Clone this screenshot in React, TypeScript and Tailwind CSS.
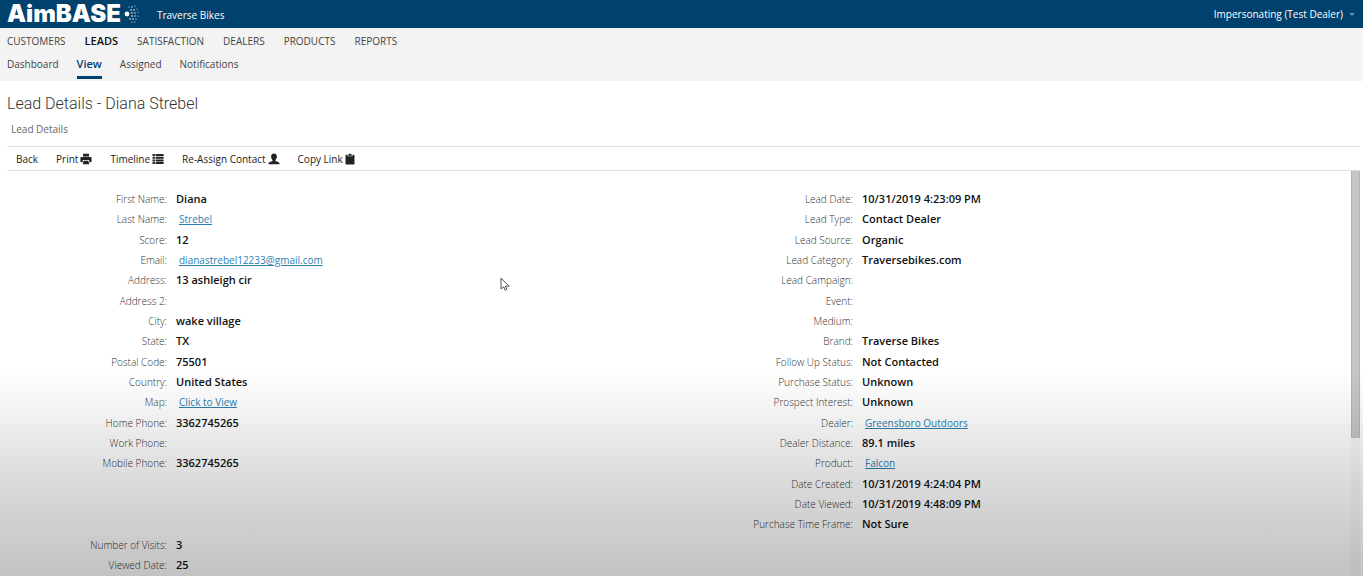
import type { ReactNode } from "react";

type Field = { label: string; value?: string; link?: boolean };

const sections = ["CUSTOMERS", "LEADS", "SATISFACTION", "DEALERS", "PRODUCTS", "REPORTS"];
const pages = ["Dashboard", "View", "Assigned", "Notifications"];

const contact: (Field | null)[] = [
  { label: "First Name", value: "Diana" },
  { label: "Last Name", value: "Strebel", link: true },
  { label: "Score", value: "12" },
  { label: "Email", value: "dianastrebel12233@gmail.com", link: true },
  { label: "Address", value: "13 ashleigh cir" },
  { label: "Address 2" },
  { label: "City", value: "wake village" },
  { label: "State", value: "TX" },
  { label: "Postal Code", value: "75501" },
  { label: "Country", value: "United States" },
  { label: "Map", value: "Click to View", link: true },
  { label: "Home Phone", value: "3362745265" },
  { label: "Work Phone" },
  { label: "Mobile Phone", value: "3362745265" },
  null,
  null,
  null,
  { label: "Number of Visits", value: "3" },
  { label: "Viewed Date", value: "25" },
];

const lead: (Field | null)[] = [
  { label: "Lead Date", value: "10/31/2019 4:23:09 PM" },
  { label: "Lead Type", value: "Contact Dealer" },
  { label: "Lead Source", value: "Organic" },
  { label: "Lead Category", value: "Traversebikes.com" },
  { label: "Lead Campaign" },
  { label: "Event" },
  { label: "Medium" },
  { label: "Brand", value: "Traverse Bikes" },
  { label: "Follow Up Status", value: "Not Contacted" },
  { label: "Purchase Status", value: "Unknown" },
  { label: "Prospect Interest", value: "Unknown" },
  { label: "Dealer", value: "Greensboro Outdoors", link: true },
  { label: "Dealer Distance", value: "89.1 miles" },
  { label: "Product", value: "Falcon", link: true },
  { label: "Date Created", value: "10/31/2019 4:24:04 PM" },
  { label: "Date Viewed", value: "10/31/2019 4:48:09 PM" },
  { label: "Purchase Time Frame", value: "Not Sure" },
];

const dots: [number, number, number][] = [
  [4, 10, 2.4],
  [8, 6, 0.8], [9, 9, 0.8], [9, 12, 0.8], [7, 15, 0.8],
  [9, 3, 0.7], [11, 6, 0.8], [12, 9, 0.7], [12, 12, 0.7], [10, 15, 0.8], [9, 18, 0.6],
  [6, 3, 0.5], [12, 2, 0.5], [14, 5, 0.5], [15, 8, 0.5], [15, 12, 0.5], [13, 15, 0.6], [12, 18, 0.5],
];

function LogoDots() {
  return (
    <svg viewBox="0 0 18 20" className="h-5 w-[18px] fill-white" aria-hidden="true">
      {dots.map(([x, y, r]) => (
        <circle key={`${x}-${y}`} cx={x} cy={y} r={r} />
      ))}
    </svg>
  );
}

function PrintIcon() {
  return (
    <svg viewBox="0 0 12 12" className="h-3 w-3 fill-current" aria-hidden="true">
      <path d="M3 .8h6v2.7H3zM1.4 4h9.2q1 0 1 1v3.3q0 .9-.9.9H9.6L9 7H3l-.6 2.2H1.3q-.9 0-.9-.9V5q0-1 1-1z" />
      <path d="M3.6 7.7h4.8l.9 3.6H2.7z" />
    </svg>
  );
}

function ListIcon() {
  return (
    <svg viewBox="0 0 12 12" className="h-3 w-3 fill-current" aria-hidden="true">
      <path d="M.5 1h2.4v2H.5zM3.6 1h8v2h-8zM.5 3.7h2.4v2H.5zM3.6 3.7h8v2h-8zM.5 6.4h2.4v2H.5zM3.6 6.4h8v2h-8zM.5 9.1h2.4v2H.5zM3.6 9.1h8v2h-8z" />
    </svg>
  );
}

function UserIcon() {
  return (
    <svg viewBox="0 0 12 12" className="h-3 w-3 fill-current" aria-hidden="true">
      <path d="M6 .4c1.8 0 2.9 1.3 2.9 3.1 0 1.2-.5 2.6-1.4 3.4v1l3.2 1.3c.6.3.8.7.8 1.2v.9H.5v-.9c0-.5.2-.9.8-1.2l3.2-1.3v-1C3.6 6.1 3.1 4.7 3.1 3.5 3.1 1.7 4.2.4 6 .4z" />
    </svg>
  );
}

function PasteIcon() {
  return (
    <svg viewBox="0 0 10 12" className="h-3 w-[10px] fill-current" aria-hidden="true">
      <path d="M1.2 1.7h1.3v1.6h5V1.7h1.3q.7 0 .7.7v8.4q0 .7-.7.7H1.200q-.7 0-.7-.7V2.4q0-.7.7-.7z" />
      <path d="M3.2 1.3h1Q4.300.4 5 .4t.8.9h1v1.4H3.2z" />
    </svg>
  );
}

function ToolButton({ children, icon }: { children: ReactNode; icon?: ReactNode }) {
  return (
    <button type="button" className="flex items-center gap-[2px]">
      {children}
      {icon}
    </button>
  );
}

function FieldList({ fields }: { fields: (Field | null)[] }) {
  return (
    <dl className="grid h-[386px] grid-rows-[repeat(19,1fr)]">
      {fields.map((f, i) =>
        f ? (
          <div key={f.label} className="flex min-h-0 items-center gap-[9px]">
            <dt className="w-40 text-right font-light text-[#333]">{f.label}:</dt>
            <dd>
              {f.link ? (
                <a href="#" className="ml-[3px] text-[#2b7fb0] underline">
                  {f.value}
                </a>
              ) : (
                <span className="text-[11px] font-semibold text-[#111]">{f.value}</span>
              )}
            </dd>
          </div>
        ) : (
          <div key={i} />
        ),
      )}
    </dl>
  );
}

export default function App() {
  return (
    <div className="relative flex h-screen flex-col overflow-hidden bg-white font-['Open_Sans','Noto_Sans',sans-serif] text-[10px] leading-4 text-[#444]">
      <header className="flex h-7 shrink-0 items-center bg-[#00426d] pr-2 pl-[7px] text-white">
        <a href="#" className="flex items-center gap-[2px]">
          <span className="font-[Inter,sans-serif] text-2xl leading-6 font-black">AimBASE</span>
          <LogoDots />
        </a>
        <span className="ml-4 pt-[2px]">Traverse Bikes</span>
        <button type="button" className="ml-auto flex items-center gap-[6px]">
          Impersonating (Test Dealer)
          <svg viewBox="0 0 6 3" className="h-[3px] w-[6px] fill-[#4f9bd0]" aria-hidden="true">
            <path d="M0 0h6L3 3z" />
          </svg>
        </button>
      </header>

      <div className="h-[53px] shrink-0 bg-[#f3f3f3] px-[7px] pt-[5px] text-[#444]">
        <nav aria-label="Sections" className="flex items-baseline gap-[19px]">
          {sections.map((s) => (
            <a key={s} href="#" className={s === "LEADS" ? "text-[11px] font-semibold text-[#111]" : ""}>
              {s}
            </a>
          ))}
        </nav>
        <nav aria-label="Pages" className="mt-[7px] flex items-baseline gap-[18px]">
          {pages.map((p) => (
            <a
              key={p}
              href="#"
              className={
                p === "View" ? "border-b-3 border-[#00426d] pb-1 text-[11px] font-semibold text-[#00426d]" : ""
              }
            >
              {p}
            </a>
          ))}
        </nav>
      </div>

      <main className="flex min-h-0 flex-1 flex-col pr-[3px] pl-[7px]">
        <h1 className="mt-3 font-[Roboto,sans-serif] text-base leading-[22px] font-light text-[#333]">
          Lead Details - Diana Strebel
        </h1>
        <h2 className="mt-[6px] ml-1 text-[#666]">Lead Details</h2>
        <div className="mt-[9px] flex h-[25px] shrink-0 items-center gap-[18px] border-y border-[#e0e0e0] pl-[9px] text-[#222]">
          <ToolButton>Back</ToolButton>
          <ToolButton icon={<PrintIcon />}>Print</ToolButton>
          <ToolButton icon={<ListIcon />}>Timeline</ToolButton>
          <ToolButton icon={<UserIcon />}>Re-Assign Contact</ToolButton>
          <ToolButton icon={<PasteIcon />}>Copy Link</ToolButton>
        </div>
        <div className="flex min-h-0 flex-1">
          <div className="grid min-w-0 flex-1 grid-cols-2 gap-7 overflow-hidden pt-[18px]">
            <FieldList fields={contact} />
            <FieldList fields={lead} />
          </div>
          <div className="w-[9px] bg-[#f8f8f8]">
            <div className="h-[66%] border-x border-[#b5b5b5] bg-[#c6c6c6]" />
          </div>
        </div>
      </main>

      <div className="pointer-events-none absolute inset-x-0 bottom-0 h-[206px] bg-[linear-gradient(to_bottom,rgba(0,0,0,0)_0%,rgba(0,0,0,0.05)_20%,rgba(0,0,0,0.14)_53%,rgba(0,0,0,0.24)_100%)]" />
      <svg
        viewBox="0 0 10 15"
        className="pointer-events-none absolute top-[277px] left-[500px] h-[15px] w-[10px] fill-white stroke-[#555]"
        aria-hidden="true"
      >
        <path d="M1 1v11l2.6-2.2 1.6 3.4 1.6-.8-1.5-3.2H9z" />
      </svg>
    </div>
  );
}
